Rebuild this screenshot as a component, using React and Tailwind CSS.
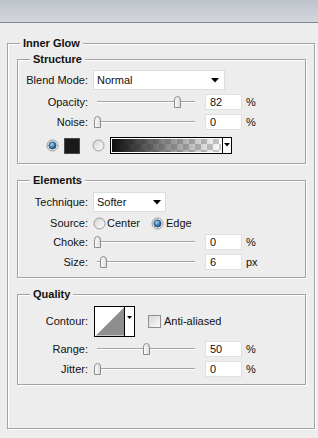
import React from "react";

function Group({ title, className = "", children }) {
  return (
    <div
      className={`border border-[#a3a3a3] shadow-[inset_1px_1px_0_#ffffff,1px_1px_0_#ffffff] ${className}`}
    >
      <div className="-mt-[7px] ml-[12px] w-fit bg-[#ededed] px-[3px] text-[11px] font-bold leading-[13px] text-[#111]">
        {title}
      </div>
      {children}
    </div>
  );
}

function Row({ label, className = "", children }) {
  return (
    <div className={`flex items-center ${className}`}>
      <div className="w-[70px] text-right leading-[13px]">{label}</div>
      <div className="ml-[5px] flex items-center">{children}</div>
    </div>
  );
}

function Thumb() {
  return (
    <svg width="9" height="12" viewBox="0 0 9 12">
      <defs>
        <linearGradient id="thg" x1="0" y1="0" x2="1" y2="0">
          <stop offset="0" stopColor="#ffffff" />
          <stop offset="1" stopColor="#d8d8d8" />
        </linearGradient>
      </defs>
      <path
        d="M1.5 11.5 V4 Q1.5 0.5 4.5 0.5 Q7.5 0.5 7.5 4 V11.5 Z"
        fill="url(#thg)"
        stroke="#8c8c8c"
      />
    </svg>
  );
}

function Slider({ value }) {
  return (
    <div className="relative flex h-[14px] w-[107px] items-center">
      <div className="ml-[4px] h-[2px] w-[98px] border-t border-b border-t-[#a4a4a4] border-b-white" />
      <div className="absolute top-[1px]" style={{ left: 4 + value * 98 - 4.5 }}>
        <Thumb />
      </div>
    </div>
  );
}

function NumField({ value, unit }) {
  return (
    <>
      <div className="ml-[5px] h-[16px] w-[37px] border border-[#e0e0e0] bg-white pl-[4px] leading-[14px]">
        {value}
      </div>
      <span className="ml-[4px] leading-[13px]">{unit}</span>
    </>
  );
}

function Arrow({ className = "" }) {
  return (
    <svg width="8" height="5" viewBox="0 0 8 5" className={className}>
      <polygon points="0,0 8,0 4,4.5" fill="#000" />
    </svg>
  );
}

function Radio({ checked, id }) {
  return (
    <svg width="13" height="13" viewBox="0 0 13 13">
      <defs>
        <linearGradient id={`ru${id}`} x1="0" y1="0" x2="1" y2="1">
          <stop offset="0" stopColor="#d4d4d4" />
          <stop offset="1" stopColor="#fcfcfc" />
        </linearGradient>
        <radialGradient id={`rc${id}`} cx="0.4" cy="0.35" r="0.7">
          <stop offset="0" stopColor="#a9d4f2" />
          <stop offset="0.55" stopColor="#3f7fb3" />
          <stop offset="1" stopColor="#173f63" />
        </radialGradient>
      </defs>
      <circle cx="6.5" cy="6.5" r="5.5" fill={`url(#ru${id})`} stroke="#9b9b9b" />
      {checked && <circle cx="6.5" cy="6.5" r="3.6" fill={`url(#rc${id})`} stroke="#24547d" strokeWidth="0.8" />}
    </svg>
  );
}

function Select({ text, width, arrowRight }) {
  return (
    <div
      className="flex h-[20px] items-center justify-between border border-[#dcdcdc] bg-white pl-[3px]"
      style={{ width }}
    >
      <span className="leading-[13px]">{text}</span>
      <Arrow className={arrowRight} />
    </div>
  );
}

export default function App() {
  return (
    <div className="h-[438px] w-[318px] overflow-hidden bg-[#ededed] font-['Liberation_Sans',Arial,sans-serif] text-[11px] text-[#111]">
      <div className="h-[23px] border-b border-[#80848b] bg-linear-to-b from-[#bfc3cb] to-[#d3d6dc]" />
      <Group title="Inner Glow" className="ml-[7px] mt-[20px] w-[308px]">
        <div className="pb-[43px] pl-[9px]">
          <Group title="Structure" className="mt-[9px] w-[289px]">
            <div className="pb-[9px] pt-[4px]">
              <Row label="Blend Mode:" className="h-[20px]">
                <Select text="Normal" width={132} arrowRight="mr-[5px]" />
              </Row>
              <Row label="Opacity:" className="mt-[2px] h-[20px]">
                <Slider value={0.82} />
                <NumField value="82" unit="%" />
              </Row>
              <Row label="Noise:" className="h-[20px]">
                <Slider value={0} />
                <NumField value="0" unit="%" />
              </Row>
              <div className="mt-[5px] flex h-[17px] items-center">
                <div className="ml-[28px]">
                  <Radio checked id="a" />
                </div>
                <div className="ml-[5px] h-[16px] w-[16px] border border-[#4a4a4a] bg-[#1b191a]" />
                <div className="ml-[12px]">
                  <Radio id="b" />
                </div>
                <div className="ml-[5px] flex h-[17px] w-[122px] border border-black">
                  <div className="flex-1 bg-[conic-gradient(#c9c9c9_25%,#ffffff_0_50%,#c9c9c9_0_75%,#ffffff_0)] bg-[length:12px_12px]">
                    <div className="h-full w-full bg-linear-to-r from-[#0d0d0d] via-[#5a5a5a]/70 to-transparent shadow-[inset_0_0_0_1px_#ffffff]" />
                  </div>
                  <div className="flex w-[9px] items-start justify-center border-l border-black bg-white pt-[5px]">
                    <svg width="6" height="4" viewBox="0 0 6 4">
                      <polygon points="0,0 6,0 3,3.5" fill="#000" />
                    </svg>
                  </div>
                </div>
              </div>
            </div>
          </Group>

          <Group title="Elements" className="mt-[16px] w-[289px]">
            <div className="pb-[5px] pt-[5px]">
              <Row label="Technique:" className="h-[20px]">
                <Select text="Softer" width={73} arrowRight="mr-[4px]" />
              </Row>
              <Row label="Source:" className="mt-[2px] h-[18px]">
                <div className="flex w-[58px] items-center">
                  <Radio id="c" />
                  <span className="ml-[1px] leading-[13px]">Center</span>
                </div>
                <Radio checked id="d" />
                <span className="ml-[2px] leading-[13px]">Edge</span>
              </Row>
              <Row label="Choke:" className="h-[20px]">
                <Slider value={0} />
                <NumField value="0" unit="%" />
              </Row>
              <Row label="Size:" className="h-[20px]">
                <Slider value={0.07} />
                <NumField value="6" unit="px" />
              </Row>
            </div>
          </Group>

          <Group title="Quality" className="mt-[16px] w-[289px]">
            <div className="pb-[5px] pt-[5px]">
              <Row label="Contour:" className="h-[31px]">
                <svg width="41" height="31" viewBox="0 0 41 31" className="ml-[1px]">
                  <rect x="0.5" y="0.5" width="40" height="30" fill="#ffffff" stroke="#000" />
                  <polygon points="2,29.5 30,1.5 30,29.5" fill="#8e8e8e" />
                  <line x1="30.5" y1="0" x2="30.5" y2="31" stroke="#000" />
                  <polygon points="33,10 38,10 35.5,13" fill="#000" />
                </svg>
                <div className="ml-[13px] h-[13px] w-[13px] border border-[#8e8e8e] bg-linear-to-br from-[#d6d6d6] to-[#fbfbfb]" />
                <span className="ml-[3px] leading-[13px]">Anti-aliased</span>
              </Row>
              <Row label="Range:" className="mt-[2px] h-[20px]">
                <Slider value={0.5} />
                <NumField value="50" unit="%" />
              </Row>
              <Row label="Jitter:" className="h-[20px]">
                <Slider value={0} />
                <NumField value="0" unit="%" />
              </Row>
            </div>
          </Group>
        </div>
      </Group>
    </div>
  );
}
